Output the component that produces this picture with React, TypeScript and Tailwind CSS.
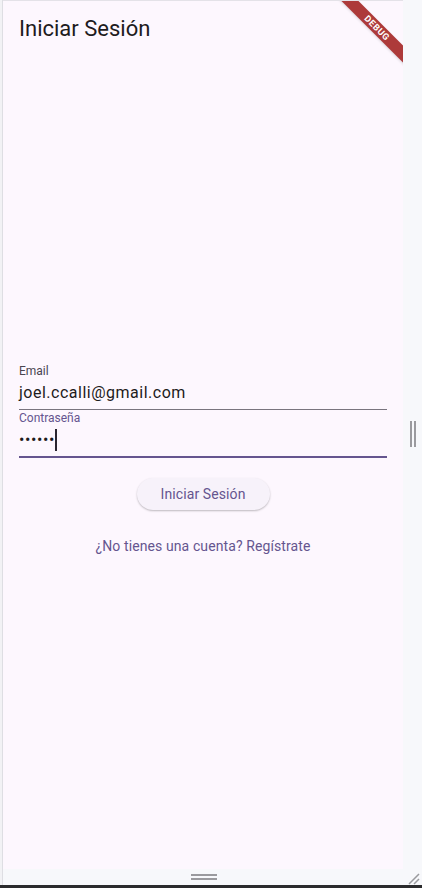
import React from "react";

const font = { fontFamily: "Roboto, 'Noto Sans', sans-serif" };

const DebugBanner = () => (
  <div className="pointer-events-none absolute right-0 top-0 h-[80px] w-[80px] overflow-hidden">
    <div className="absolute left-[-1px] top-[21px] flex h-[12px] w-[110px] rotate-45 items-center justify-center bg-[#ad3a3a] shadow-sm">
      <span className="text-[9px] font-bold leading-none tracking-[0.5px] text-white">DEBUG</span>
    </div>
  </div>
);

const App = () => {
  return (
    <div className="flex h-[888px] w-[422px] flex-col bg-[#f7f8fb]" style={font}>
      <div className="flex h-[885px]">
        <div className="w-[3px] border-r border-[#dedee3] bg-[#f2f2f5]" />
        <div className="flex flex-1 flex-col">
          <div className="flex h-[869px]">
            {/* app area */}
            <div className="relative flex w-[400px] flex-col border-t border-[#e4e2e8] bg-[#fdf7fe]">
              <DebugBanner />
              <header className="flex h-14 items-center px-4">
                <h1 className="text-[22px] leading-7 text-[#1d1b20]">Iniciar Sesión</h1>
              </header>
              <main className="flex flex-col px-4 pt-[306px]">
                <div className="flex flex-col border-b border-[#79747e] pb-1">
                  <label className="h-4 text-[12px] leading-4 text-[#49454f]">Email</label>
                  <div className="mt-[2px] h-6 text-[16px] leading-6 tracking-[0.5px] text-[#1d1b20]">
                    joel.ccalli@gmail.com
                  </div>
                </div>
                <div className="flex flex-col border-b-2 border-[#65558f] pb-1">
                  <label className="h-4 text-[12px] leading-4 text-[#65558f]">Contraseña</label>
                  <div className="mt-[2px] flex h-6 items-center text-[16px] leading-6 text-[#1d1b20]">
                    <span className="tracking-[0.6px]">••••••</span>
                    <span className="h-[22px] w-[2px] bg-[#2a2530]" />
                  </div>
                </div>
                <div className="mt-5 flex justify-center">
                  <button className="h-8 rounded-full bg-[#f7f2fa] px-6 text-[14px] tracking-[0.1px] text-[#65558f] shadow-[0_1px_2px_rgba(0,0,0,0.25)]">
                    Iniciar Sesión
                  </button>
                </div>
                <div className="mt-5 flex justify-center">
                  <button className="h-8 px-3 text-[14px] tracking-[0.1px] text-[#65558f]">
                    ¿No tienes una cuenta? Regístrate
                  </button>
                </div>
              </main>
            </div>
            {/* right strip with handle */}
            <div className="flex flex-1 items-start justify-center pt-[421px]">
              <div className="flex gap-[2px]">
                <div className="h-[26px] w-[2px] bg-[#9a9a9e]" />
                <div className="h-[26px] w-[2px] bg-[#9a9a9e]" />
              </div>
            </div>
          </div>
          {/* bottom strip */}
          <div className="relative flex flex-1 items-center justify-center">
            <div className="flex flex-col gap-[2px] pr-[18px]">
              <div className="h-[2px] w-[26px] bg-[#9a9a9e]" />
              <div className="h-[2px] w-[26px] bg-[#9a9a9e]" />
            </div>
            <svg className="absolute bottom-0 right-[2px]" width="14" height="14" viewBox="0 0 14 14">
              <path d="M13 3 L3 13 M13 8 L8 13" stroke="#9a9a9e" strokeWidth="1.5" fill="none" />
            </svg>
          </div>
        </div>
      </div>
      <div className="h-[3px] bg-[#2b2b2d]" />
    </div>
  );
};

export default App;
